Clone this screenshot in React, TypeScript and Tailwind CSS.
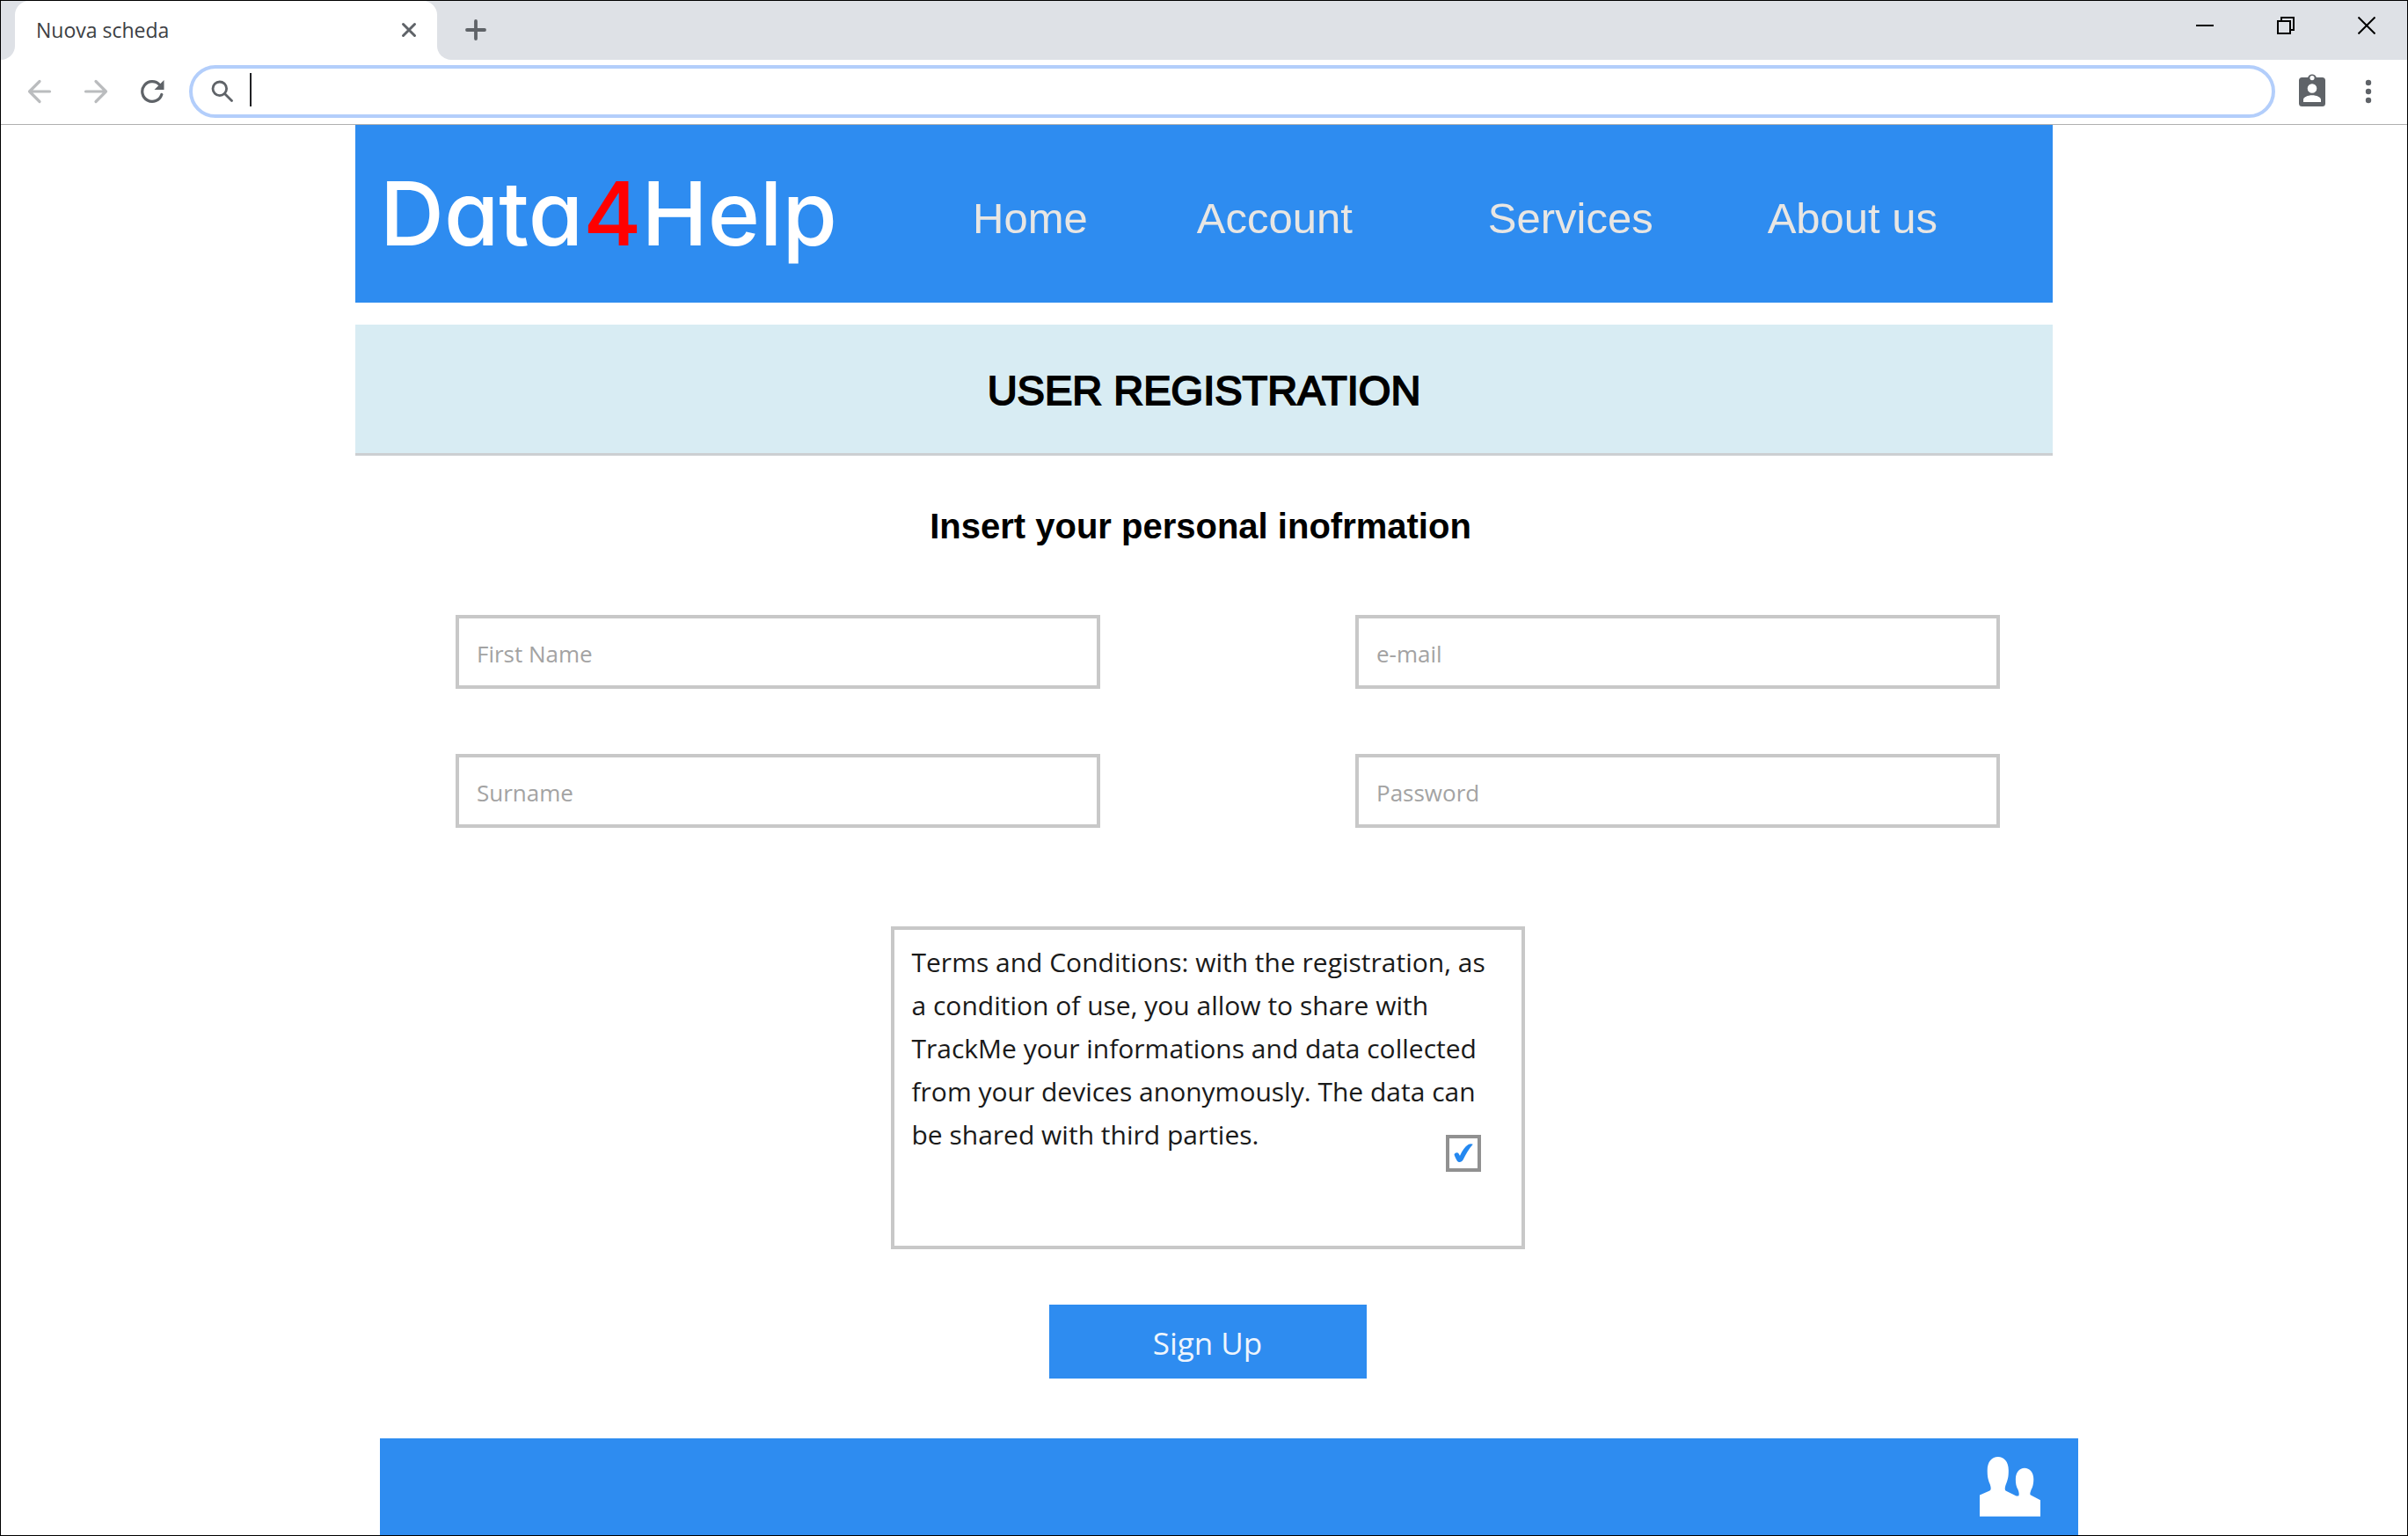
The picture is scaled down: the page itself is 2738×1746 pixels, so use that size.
import React, { useState } from "react";

const strokeIcon = {
  fill: "none",
  stroke: "currentColor",
  strokeLinecap: "round" as const,
};

function TabStrip() {
  return (
    <div className="flex h-[67px] bg-white">
      <div className="w-4 rounded-br-2xl bg-[#dee1e6]" />
      <div className="bg-[#dee1e6]">
        <div className="flex h-full w-[480px] items-center justify-between rounded-t-2xl bg-white pr-4 pb-0.5 pl-6">
          <span className="text-[23px] leading-8 text-[#3c4043]">Nuova scheda</span>
          <button type="button" aria-label="Close tab" className="flex h-8 w-8 items-center justify-center text-[#5f6368]">
            <svg width="18" height="18" viewBox="0 0 18 18" {...strokeIcon} strokeWidth="3">
              <path d="M2.500 2.500L15.500 15.500M15.500 2.500L2.500 15.500" />
            </svg>
          </button>
        </div>
      </div>
      <div className="flex flex-1 justify-between rounded-bl-2xl bg-[#dee1e6]">
        <button type="button" aria-label="New tab" className="ml-6 flex h-[66px] w-10 items-center justify-center text-[#5f6368]">
          <svg width="26" height="26" viewBox="0 0 26 26" {...strokeIcon} strokeWidth="3.8">
            <path d="M13 3V23M3 13H23" />
          </svg>
        </button>
        <div className="flex h-14 text-black">
          <button type="button" aria-label="Minimize" className="flex w-[92px] items-center justify-center">
            <svg width="20" height="20" viewBox="0 0 20 20" fill="currentColor">
              <path d="M0 9H20V11H0Z" />
            </svg>
          </button>
          <button type="button" aria-label="Restore" className="flex w-[92px] items-center justify-center">
            <svg width="20" height="20" viewBox="0 0 20 20" fill="none" stroke="currentColor" strokeWidth="2">
              <path d="M1 5H15V19H1ZM5 5V1H19V15H15" />
            </svg>
          </button>
          <button type="button" aria-label="Close" className="flex w-[92px] items-center justify-center">
            <svg width="20" height="20" viewBox="0 0 20 20" fill="none" stroke="currentColor" strokeWidth="2">
              <path d="M0.500 0.500L19.500 19.500M19.500 0.500L0.500 19.500" />
            </svg>
          </button>
        </div>
      </div>
    </div>
  );
}

function Toolbar() {
  return (
    <div className="flex items-center border-b border-[#b0b0b0] bg-white pt-1.5 pr-3 pb-[7px] pl-3">
      <button type="button" aria-label="Back" className="flex h-12 w-16 items-center justify-center text-[#babcbe]">
        <svg width="28" height="28" viewBox="0 0 28 28" {...strokeIcon} strokeWidth="3.2" strokeLinejoin="round">
          <path d="M14 2.500L2.500 14L14 25.500M2.500 14H25.500" />
        </svg>
      </button>
      <button type="button" aria-label="Forward" className="flex h-12 w-16 items-center justify-center text-[#babcbe]">
        <svg width="28" height="28" viewBox="0 0 28 28" {...strokeIcon} strokeWidth="3.2" strokeLinejoin="round">
          <path d="M14 2.500L25.500 14L14 25.500M25.500 14H2.500" />
        </svg>
      </button>
      <button type="button" aria-label="Reload" className="flex h-12 w-16 items-center justify-center text-[#5f6368]">
        <svg width="28" height="28" viewBox="0 0 28 28">
          <path
            d="M22.500 6.500A11.300 11.300 0 1 0 24.800 17.500"
            fill="none"
            stroke="currentColor"
            strokeWidth="3.2"
            strokeLinecap="round"
          />
          <path d="M27.500 1V12H16.500Z" fill="currentColor" />
        </svg>
      </button>
      <label className="ml-2.5 flex h-[60px] flex-1 items-center rounded-full border-4 border-[#b3cefb] bg-white pl-[21px]">
        <svg className="text-[#5f6368]" width="26" height="26" viewBox="0 0 26 26" {...strokeIcon} strokeWidth="2.8">
          <circle cx="9.800" cy="9.800" r="7.800" />
          <path d="M15.500 15.500L23.500 23.500" />
        </svg>
        <span className="mb-1 ml-[18px] h-[38px] w-0.5 bg-[#202124]" />
        <input type="text" aria-label="Address" className="h-full min-w-0 flex-1 bg-transparent pr-6 text-2xl outline-none" />
      </label>
      <button type="button" aria-label="Profile" className="ml-2.5 flex h-12 w-16 items-center justify-center pb-1 text-[#5f6368]">
        <svg width="30" height="38" viewBox="0 0 30 38">
          <path
            fill="currentColor"
            fillRule="evenodd"
            d="M3.500 5H10.200A5 5 0 0 1 19.800 5H26.500A3.500 3.500 0 0 1 30 8.500V34.500A3.500 3.500 0 0 1 26.500 38H3.500A3.500 3.500 0 0 1 0 34.500V8.500A3.500 3.500 0 0 1 3.500 5ZM15 3A2.600 2.600 0 1 0 15 8.200A2.600 2.600 0 1 0 15 3ZM15 12.200A5 5 0 1 0 15 22.800A5 5 0 1 0 15 12.200ZM5 33H25V30.500C25 27.500 20 25.300 15 25.300C10 25.300 5 27.500 5 30.500Z"
          />
        </svg>
      </button>
      <button type="button" aria-label="Menu" className="flex h-12 w-16 items-center justify-center text-[#5f6368]">
        <svg width="8" height="28" viewBox="0 0 8 28" fill="currentColor">
          <circle cx="4" cy="4" r="3.200" />
          <circle cx="4" cy="14" r="3.200" />
          <circle cx="4" cy="24" r="3.200" />
        </svg>
      </button>
    </div>
  );
}

function SiteHeader() {
  return (
    <header className="flex h-[202px] items-start bg-[#2e8cf0] pl-7">
      <a href="#home" className="mt-10 w-[520px] font-['Inter'] text-[101px] leading-[120px] font-medium whitespace-nowrap text-white [font-feature-settings:'cv11']">
        Data<span className="text-[#ff0000]">4</span>Help
      </a>
      <nav className="mt-[76px] ml-[154px] flex font-['Liberation_Sans'] text-[49px] leading-[60px] whitespace-nowrap text-[#e8e6e3]">
        <a href="#home">Home</a>
        <a href="#account" className="ml-[124px]">Account</a>
        <a href="#services" className="ml-[154px]">Services</a>
        <a href="#about" className="ml-[130px]">About us</a>
      </nav>
    </header>
  );
}

function Field({ label, type = "text" }: { label: string; type?: string }) {
  return (
    <input
      type={type}
      aria-label={label}
      placeholder={label}
      className="h-[84px] w-full border-4 border-[#c8c8c8] bg-white px-5 pt-1 text-[26px] text-[#333333] outline-none placeholder:text-[#a3a3a3]"
    />
  );
}

function Terms() {
  const [accepted, setAccepted] = useState(true);
  return (
    <div className="mt-28 ml-2 h-[367px] w-[721px] border-4 border-[#c8c8c8] bg-white pt-3 pl-5">
      <label htmlFor="terms" className="block text-[30px] leading-[49px] whitespace-nowrap text-[#1a1a1a]">
        Terms and Conditions: with the registration, as
        <br />a condition of use, you allow to share with
        <br />TrackMe your informations and data collected
        <br />from your devices anonymously. The data can
        <br />be shared with third parties.
      </label>
      <div className="relative -mt-6 mr-[46px] ml-auto h-[42px] w-10">
        <input
          id="terms"
          type="checkbox"
          checked={accepted}
          onChange={(e) => setAccepted(e.target.checked)}
          className="block h-full w-full appearance-none border-4 border-[#919191] bg-white"
        />
        {accepted && (
          <svg className="pointer-events-none absolute inset-0 m-auto" width="22" height="22" viewBox="0 0 22 22">
            <path
              d="M0.500 12.500C1.500 9.500 5 9.500 6 12C6.300 12.800 6.500 13.200 7 13.800C9.500 8 12.500 3.500 16.500 1C18 0 20.500 0 21.800 0.700C17.500 5.500 14 11.500 10.500 18.500C9 21.500 5 22 3.500 19C2.500 17 1 14.500 0.500 12.500Z"
              fill="#2488f0"
            />
          </svg>
        )}
      </div>
    </div>
  );
}

export default function App() {
  return (
    <div className="flex min-h-screen flex-col border border-black bg-white font-['Open_Sans',sans-serif]">
      <TabStrip />
      <Toolbar />
      <main className="mx-auto w-full max-w-[1930px]">
        <SiteHeader />
        <div className="mt-[25px] flex h-[149px] items-center justify-center border-b-[3px] border-[#cccfd2] bg-[#d8ecf3] pt-1">
          <h1 className="font-['Liberation_Sans'] text-[47px] leading-[60px] text-black [-webkit-text-stroke:2px_black]">USER REGISTRATION</h1>
        </div>
        <form className="flex flex-col items-center" onSubmit={(e) => e.preventDefault()}>
          <h2 className="mt-14 mr-2 font-['Liberation_Sans'] text-[40px] leading-[48px] font-bold text-black">
            Insert your personal inofrmation
          </h2>
          <div className="mt-[77px] grid w-full grid-cols-2 gap-x-[290px] gap-y-[74px] pr-[60px] pl-[114px]">
            <Field label="First Name" />
            <Field label="e-mail" type="email" />
            <Field label="Surname" />
            <Field label="Password" type="password" />
          </div>
          <Terms />
          <button type="submit" className="mt-[63px] ml-2 h-[84px] w-[361px] bg-[#2e8cf0] pt-1 text-[35px] text-[#eef5fd]">
            Sign Up
          </button>
        </form>
      </main>
      <div className="mt-[68px] flex flex-1 justify-center pl-14">
        <footer className="flex w-full max-w-[1931px] justify-end bg-[#2e8cf0] pt-[21px] pr-[43px]">
          <a href="#community" aria-label="Community" className="text-white">
            <svg width="69" height="68" viewBox="300 139 206 203" fill="currentColor">
              <path d="M300 341V269L334 254C340 250 338 240 334 230C328 215 326 205 326 185C326 155 342 139 362 139C382 139 398 155 398 185C398 205 396 215 390 230C386 240 384 250 388 254L424 272H432C435 265 433 258 430 250C424 240 422 230 422 215C422 192 435 177 452 177C470 177 483 192 483 215C483 230 480 242 475 250C472 258 470 264 472 268L506 286V341Z" />
            </svg>
          </a>
        </footer>
      </div>
    </div>
  );
}
